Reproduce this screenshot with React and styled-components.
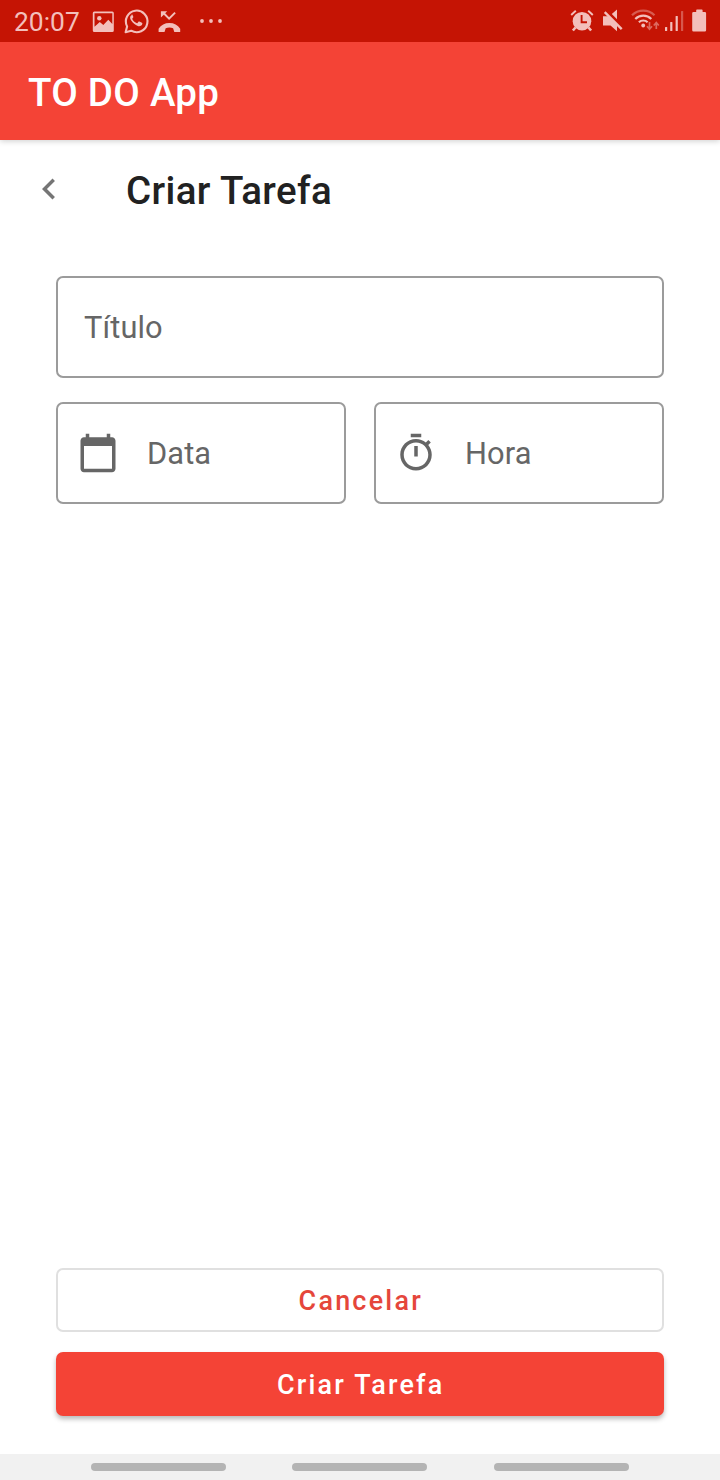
import React from "react";
import styled, { createGlobalStyle } from "styled-components";

const GlobalStyle = createGlobalStyle`
  *, *::before, *::after { box-sizing: border-box; }
  body {
    margin: 0;
    background: #fff;
    font-family: Roboto, "Liberation Sans", sans-serif;
  }
  button { font: inherit; margin: 0; padding: 0; }
`;

const Screen = styled.div`
  display: flex;
  flex-direction: column;
  width: 720px;
  height: 1480px;
  background: #fff;
`;

const StatusBar = styled.div`
  position: relative;
  z-index: 1;
  display: flex;
  flex: none;
  justify-content: space-between;
  height: 42px;
  padding: 0 12px 0 14px;
  background: #c51404;
  color: #f3bfbb;
`;

const StatusGroup = styled.div`
  display: flex;
  gap: ${(p) => p.$gap}px;
`;

const Clock = styled.span`
  width: 68px;
  font-size: 26.4px;
  line-height: 44px;
  white-space: nowrap;
`;

const Glyph = styled.svg`
  display: block;
  flex: none;
  height: 42px;
  overflow: visible;
  fill: currentColor;
`;

const AppBar = styled.header`
  display: flex;
  flex: none;
  align-items: center;
  height: 98px;
  padding: 2px 28px 0;
  background: #f44336;
  color: #fff;
  font-size: 38.5px;
  font-weight: 500;
  letter-spacing: 0.27px;
  box-shadow: 0 1px 6px rgba(0, 0, 0, 0.2);
`;

const PageHeader = styled.div`
  display: flex;
  flex: none;
  align-items: center;
  height: 98px;
  padding-left: 28px;
`;

const BackButton = styled.button`
  display: flex;
  width: 42px;
  height: 42px;
  border: 0;
  background: none;
  color: #757575;
`;

const PageTitle = styled.h1`
  margin: 3px 0 0 56px;
  color: #212121;
  font-size: 38.5px;
  line-height: 46px;
  font-weight: 500;
  letter-spacing: 0.38px;
`;

const Icon = styled.svg`
  flex: none;
  width: 42px;
  height: 42px;
  fill: currentColor;
`;

const Form = styled.main`
  display: flex;
  flex: 1;
  flex-direction: column;
  gap: 24px;
  padding: 38px 56px;
`;

const FieldRow = styled.div`
  display: grid;
  grid-template-columns: 1fr 1fr;
  gap: 28px;
`;

const Field = styled.div`
  display: flex;
  align-items: center;
  gap: 28px;
  height: 102px;
  padding-left: ${(p) => (p.$icon ? 19 : 26)}px;
  border: 2px solid #9b9b9b;
  border-radius: 7px;
  color: #666;
`;

const Placeholder = styled.span`
  padding-top: 2px;
  font-size: 30.8px;
  line-height: 36px;
  letter-spacing: 0.1px;
`;

const Actions = styled.div`
  display: flex;
  flex: none;
  flex-direction: column;
  gap: 20px;
  padding: 0 56px 38px;
`;

const Button = styled.button`
  height: 64px;
  border: ${(p) => (p.$filled ? "0" : "2px solid #e0e0e0")};
  border-radius: 7px;
  background: ${(p) => (p.$filled ? "#f44336" : "#fff")};
  color: ${(p) => (p.$filled ? "#fff" : "#e5463b")};
  box-shadow: ${(p) => (p.$filled ? "0 3px 5px rgba(0, 0, 0, 0.28)" : "none")};
  && {
    padding: 2px 0 0 1.5px;
    font-size: 26.95px;
    font-weight: 500;
    letter-spacing: 2.22px;
  }
`;

const NavigationBar = styled.nav`
  display: flex;
  flex: none;
  gap: 66.4px;
  height: 26px;
  padding: 9px 0 0 91px;
  background: #f1f1f1;
`;

const NavHandle = styled.span`
  width: 135px;
  height: 7.5px;
  border-radius: 4px;
  background: #b4b4b4;
`;

function PictureGlyph() {
  return (
    <Glyph width="23" viewBox="0 0 23 42">
      <path fillRule="evenodd" d="M2.3 11.5h18a1.5 1.5 0 0 1 1.5 1.5v17.5a1.5 1.5 0 0 1-1.5 1.5H2.3a1.5 1.5 0 0 1-1.5-1.5v-17.5A1.5 1.5 0 0 1 2.3 11.5zM2.5 13.2v13.500l5.300-4.700 3.500 3 5-5.300 4 4.300V13.200z" />
      <circle cx="7.3" cy="18.3" r="2.2" />
    </Glyph>
  );
}

function ChatGlyph() {
  return (
    <Glyph width="24" viewBox="0 0 24 42">
      <path
        d="M1.6 32.3l1.5-5.9A10.8 10.8 0 1 1 7.2 30.7z"
        fill="none"
        stroke="currentColor"
        strokeWidth="2.1"
        strokeLinejoin="round"
      />
      <path d="M8.4 15c-.5-.1-1 .1-1.400.6-1.200 1.300-1.200 3 .2 5 1.900 2.800 4.300 4.900 7.200 5.600 1.900.4 3.600-.7 3.900-2.200.2-.9 0-1.100-.4-1.300l-2.500-1.200c-.4-.2-.7-.1-1 .3l-.9 1.100c-.3.3-.6.3-1 .1-1.900-.9-3.200-2.100-4.100-3.800-.2-.4-.1-.6.100-.9l.7-.9c.2-.3.1-.6 0-.8l-1-2.400c-.1-.2-.3-.3-.8-.3z" />
    </Glyph>
  );
}

function MissedCallGlyph() {
  return (
    <Glyph width="23" viewBox="0 0 23 42">
      <path d="M2.900 11.300h6.300l-2 2 3.900 3.900 5.300-5.300 1.400 1.400-6.700 6.700-5.300-5.300-2.900 2.900z" />
      <path d="M.6 31.900V28.800C3 24.900 6.800 22.900 11.400 22.900s8.400 2 10.800 5.900v3.100h-5.900l-1.200-3.700c-2.400-.8-5-.8-7.400 0l-1.200 3.700z" />
    </Glyph>
  );
}

function MoreGlyph() {
  return (
    <Glyph width="24" viewBox="0 0 24 42">
      <circle cx="3" cy="21" r="1.9" />
      <circle cx="12" cy="21" r="1.9" />
      <circle cx="21" cy="21" r="1.9" />
    </Glyph>
  );
}

function AlarmGlyph() {
  return (
    <Glyph width="24" viewBox="0 0 24 42">
      <g fill="none" stroke="currentColor">
        <path d="M1.2 15l4.600-4.200M22.800 15l-4.600-4.200" strokeWidth="1.9" />
        <path d="M5.500 27.500l-2.600 3M18.500 27.500l2.600 3" strokeWidth="2.6" />
      </g>
      <circle cx="12" cy="21.2" r="9.3" />
      <path d="M11.600 15v7.200h5.400" fill="none" stroke="#c51404" strokeWidth="1.9" />
    </Glyph>
  );
}

function MuteGlyph() {
  return (
    <Glyph width="21" viewBox="0 0 21 42">
      <path d="M1 16.300h5.500l8.500 8.700v6.300l-6.500-5.900H1zM9.800 14L15 9.500v9.800z" />
      <path d="M2.700 12.200l17 17" fill="none" stroke="currentColor" strokeWidth="2.4" />
    </Glyph>
  );
}

function WifiGlyph() {
  return (
    <Glyph width="26.5" viewBox="0 0 26.5 42">
      <g fill="none" stroke="currentColor" strokeWidth="2.2">
        <path d="M1 15.300a16 16 0 0 1 22.500 0" opacity=".42" />
        <path d="M4.300 19a11.300 11.300 0 0 1 16 0M7.900 22.300a6.200 6.200 0 0 1 8.700 0" />
      </g>
      <circle cx="12.2" cy="25.5" r="1.9" />
      <path d="M18.500 22v7M16 26.200l2.500 3 2.500-3M25.300 29v-6.200M22.800 25.500l2.500-3 2.500 3" fill="none" stroke="currentColor" strokeWidth="1.7" opacity=".5" />
    </Glyph>
  );
}

function SignalGlyph() {
  return (
    <Glyph width="19" viewBox="0 0 19 42">
      <rect x="0" y="27" width="2.2" height="4" rx=".5" />
      <rect x="5.2" y="22" width="2.2" height="9" rx=".5" />
      <rect x="10.6" y="16" width="2.2" height="15" rx=".5" />
      <rect x="16" y="11" width="2.2" height="20" rx=".5" opacity=".4" />
    </Glyph>
  );
}

function BatteryGlyph() {
  return (
    <Glyph width="16" viewBox="0 0 16 42">
      <path d="M5 9.500h4.800a.8.800 0 0 1 .8.800V12h2.200A1.300 1.300 0 0 1 14.100 13.300v17a1.300 1.300 0 0 1-1.300 1.300H1.500A1.300 1.300 0 0 1 .2 30.300v-17A1.300 1.300 0 0 1 1.500 12h2.700v-1.700a.8.800 0 0 1 .8-.8z" />
    </Glyph>
  );
}

const MoreSlot = styled.div`
  padding-left: 9px;
`;

const BackIcon = () => (
  <Icon viewBox="0 0 24 24">
    <path d="M15.410 7.410L14 6l-6 6 6 6 1.410-1.410L10.830 12z" />
  </Icon>
);

const CalendarIcon = () => (
  <Icon viewBox="0 0 24 24">
    <path d="M20 3h-1V1h-2v2H7V1H5v2H4c-1.100 0-2 .9-2 2v16c0 1.100.9 2 2 2h16c1.100 0 2-.9 2-2V5c0-1.100-.9-2-2-2zm0 18H4V8h16v13z" />
  </Icon>
);

const TimerIcon = () => (
  <Icon viewBox="0 0 24 24">
    <path d="M15 1H9v2h6V1zm-4 13h2V8h-2v6zm8.030-6.610l1.420-1.420c-.43-.51-.9-.99-1.410-1.410l-1.420 1.420C16.070 4.740 14.120 4 12 4c-4.970 0-9 4.030-9 9s4.020 9 9 9 9-4.030 9-9c0-2.120-.74-4.070-1.970-5.610zM12 20c-3.870 0-7-3.130-7-7s3.130-7 7-7 7 3.130 7 7-3.130 7-7 7z" />
  </Icon>
);

export default function App() {
  return (
    <Screen>
      <GlobalStyle />
      <StatusBar>
        <StatusGroup $gap={9.6}>
          <Clock>20:07</Clock>
          <PictureGlyph />
          <ChatGlyph />
          <MissedCallGlyph />
          <MoreSlot>
            <MoreGlyph />
          </MoreSlot>
        </StatusGroup>
        <StatusGroup $gap={8}>
          <AlarmGlyph />
          <MuteGlyph />
          <WifiGlyph />
          <SignalGlyph />
          <BatteryGlyph />
        </StatusGroup>
      </StatusBar>
      <AppBar>TO DO App</AppBar>
      <PageHeader>
        <BackButton aria-label="Voltar">
          <BackIcon />
        </BackButton>
        <PageTitle>Criar Tarefa</PageTitle>
      </PageHeader>
      <Form>
        <Field>
          <Placeholder>Título</Placeholder>
        </Field>
        <FieldRow>
          <Field $icon>
            <CalendarIcon />
            <Placeholder>Data</Placeholder>
          </Field>
          <Field $icon>
            <TimerIcon />
            <Placeholder>Hora</Placeholder>
          </Field>
        </FieldRow>
      </Form>
      <Actions>
        <Button>Cancelar</Button>
        <Button $filled>Criar Tarefa</Button>
      </Actions>
      <NavigationBar>
        <NavHandle />
        <NavHandle />
        <NavHandle />
      </NavigationBar>
    </Screen>
  );
}
